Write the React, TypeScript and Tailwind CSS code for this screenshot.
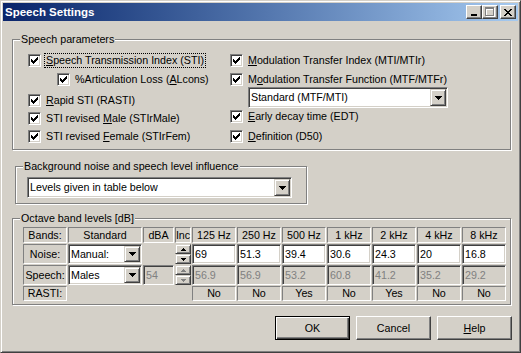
import React from "react";

// classic 3D edges
const sunken2 =
  "border border-t-[#808080] border-l-[#808080] border-r-white border-b-white shadow-[inset_1px_1px_#404040,inset_-1px_-1px_#d4d0c8]";
const sunken1 = "border border-t-[#808080] border-l-[#808080] border-r-white border-b-white";
const raisedBtn =
  "border border-t-[#d4d0c8] border-l-[#d4d0c8] border-r-[#404040] border-b-[#404040] shadow-[inset_1px_1px_#fff,inset_-1px_-1px_#808080]";
const pushBtn =
  "border border-t-white border-l-white border-r-[#404040] border-b-[#404040] shadow-[inset_-1px_-1px_#808080]";
const groupBox = "border border-[#808080] shadow-[inset_1px_1px_#fff,1px_1px_#fff]";

const CheckMark = () => (
  <svg width="7" height="7" viewBox="0 0 7 7" shapeRendering="crispEdges">
    <path
      d="M0 2h1v3H0z M1 3h1v3H1z M2 4h1v3H2z M3 3h1v3H3z M4 2h1v3H4z M5 1h1v3H5z M6 0h1v3H6z"
      fill="#000"
    />
  </svg>
);

const DownArrow = ({ color = "#000" }: { color?: string }) => (
  <svg width="7" height="4" viewBox="0 0 7 4" shapeRendering="crispEdges">
    <path d="M0 0h7v1H0z M1 1h5v1H1z M2 2h3v1H2z M3 3h1v1H3z" fill={color} />
  </svg>
);

const SmallArrow = ({ up, color }: { up: boolean; color: string }) => (
  <svg width="5" height="3" viewBox="0 0 5 3" shapeRendering="crispEdges">
    <path
      d={up ? "M2 0h1v1H2z M1 1h3v1H1z M0 2h5v1H0z" : "M0 0h5v1H0z M1 1h3v1H1z M2 2h1v1H2z"}
      fill={color}
    />
  </svg>
);

const CheckRow = ({
  children,
  className = "",
  focus = false,
}: {
  children: React.ReactNode;
  className?: string;
  focus?: boolean;
}) => (
  <div className={`flex items-center h-[13px] ${className}`}>
    <span className={`w-[13px] h-[13px] shrink-0 flex items-center justify-center bg-white ${sunken2}`}>
      <CheckMark />
    </span>
    <span
      className={`ml-[3px] px-[1px] leading-[13px] whitespace-nowrap border border-dotted ${
        focus ? "border-black" : "border-transparent"
      }`}
    >
      {children}
    </span>
  </div>
);

const U = ({ children }: { children: React.ReactNode }) => (
  <span className="underline underline-offset-[1px]">{children}</span>
);

const Combo = ({ text, className = "" }: { text: string; className?: string }) => (
  <div className={`flex p-[1px] bg-white ${sunken2} ${className}`}>
    <span className="flex-1 self-center pl-[1px] leading-[13px] whitespace-nowrap overflow-hidden">{text}</span>
    <span className={`w-[16px] h-full shrink-0 flex items-center justify-center bg-[#d4d0c8] ${raisedBtn}`}>
      <DownArrow />
    </span>
  </div>
);

const Spinner = ({ disabled = false }: { disabled?: boolean }) => {
  const c = disabled ? "#808080" : "#000";
  return (
    <div className="flex flex-col w-[16px] h-full">
      <span className={`flex-1 flex items-center justify-center bg-[#d4d0c8] ${raisedBtn}`}>
        <SmallArrow up color={c} />
      </span>
      <span className={`flex-1 flex items-center justify-center bg-[#d4d0c8] ${raisedBtn}`}>
        <SmallArrow up={false} color={c} />
      </span>
    </div>
  );
};

const GroupLabel = ({ children }: { children: React.ReactNode }) => (
  <div className="-mt-[7px] ml-[7px] px-[1px] w-fit bg-[#d4d0c8] leading-[13px] whitespace-nowrap">{children}</div>
);

const bands = ["125 Hz", "250 Hz", "500 Hz", "1 kHz", "2 kHz", "4 kHz", "8 kHz"];
const noise = ["69", "51.3", "39.4", "30.6", "24.3", "20", "16.8"];
const speech = ["56.9", "56.9", "53.2", "60.8", "41.2", "35.2", "29.2"];
const rasti = ["No", "No", "Yes", "No", "Yes", "No", "No"];

const cellText = "flex items-center justify-center leading-[13px] whitespace-nowrap";

const TitleButton = ({ children, className = "" }: { children: React.ReactNode; className?: string }) => (
  <span className={`w-[16px] h-[14px] flex items-center justify-center bg-[#d4d0c8] ${pushBtn} ${className}`}>
    {children}
  </span>
);

export default function App() {
  return (
    <div
      className={`w-[521px] h-[353px] bg-[#d4d0c8] text-black text-[10.7px] font-['Liberation_Sans',Arial,sans-serif] border border-t-[#d4d0c8] border-l-[#d4d0c8] border-r-[#404040] border-b-[#404040] shadow-[inset_1px_1px_#fff,inset_-1px_-1px_#808080] p-[2px] flex flex-col overflow-hidden`}
    >
      {/* title bar */}
      <div className="h-[18px] shrink-0 flex items-center bg-linear-to-r from-[#0a246a] to-[#a6caf0] pl-[2px] pr-[2px]">
        <span className="text-white font-bold text-[11.5px] leading-[14px]">Speech Settings</span>
        <div className="ml-auto flex items-center">
          <TitleButton>
            <svg width="8" height="7" viewBox="0 0 8 7" shapeRendering="crispEdges">
              <path d="M1 5h6v2H1z" fill="#000" />
            </svg>
          </TitleButton>
          <TitleButton>
            <svg width="10" height="10" viewBox="0 0 10 10" shapeRendering="crispEdges">
              <path d="M1 1h9v9H1z M2 3v6h7V3z" fill="#fff" fillRule="evenodd" />
              <path d="M0 0h9v9H0z M1 2v6h7V2z" fill="#808080" fillRule="evenodd" />
            </svg>
          </TitleButton>
          <TitleButton className="ml-[2px]">
            <svg width="8" height="7" viewBox="0 0 8 7" shapeRendering="crispEdges">
              <path
                d="M0 0h2v1H0z M6 0h2v1H6z M1 1h2v1H1z M5 1h2v1H5z M2 2h4v1H2z M3 3h2v1H3z M2 4h4v1H2z M1 5h2v1H1z M5 5h2v1H5z M0 6h2v1H0z M6 6h2v1H6z"
                fill="#000"
              />
            </svg>
          </TitleButton>
        </div>
      </div>

      {/* Speech parameters */}
      <div className={`mt-[18px] ml-[9px] w-[499px] h-[111px] shrink-0 ${groupBox}`}>
        <GroupLabel>Speech parameters</GroupLabel>
        <div className="flex ml-[15px]">
          <div className="w-[202px] flex flex-col">
            <CheckRow className="mt-[8px]" focus>
              <U>S</U>peech Transmission Index (STI)
            </CheckRow>
            <CheckRow className="mt-[6px] ml-[29px]">
              %Articulation Loss (<U>A</U>Lcons)
            </CheckRow>
            <CheckRow className="mt-[8px]">
              <U>R</U>apid STI (RASTI)
            </CheckRow>
            <CheckRow className="mt-[5px]">
              STI revised <U>M</U>ale (STIrMale)
            </CheckRow>
            <CheckRow className="mt-[5px]">
              STI revised <U>F</U>emale (STIrFem)
            </CheckRow>
          </div>
          <div className="flex flex-col">
            <CheckRow className="mt-[8px]">
              <U>M</U>odulation Transfer Index (MTI/MTIr)
            </CheckRow>
            <CheckRow className="mt-[6px]">
              M<U>o</U>dulation Transfer Function (MTF/MTFr)
            </CheckRow>
            <Combo text="Standard (MTF/MTI)" className="mt-[1px] ml-[18px] w-[200px] h-[21px]" />
            <CheckRow className="mt-[2px]">
              <U>E</U>arly decay time (EDT)
            </CheckRow>
            <CheckRow className="mt-[7px]">
              <U>D</U>efinition (D50)
            </CheckRow>
          </div>
        </div>
      </div>

      {/* Background noise */}
      <div className={`mt-[16px] ml-[12px] w-[292px] h-[38px] shrink-0 ${groupBox}`}>
        <GroupLabel>Background noise and speech level influence</GroupLabel>
        <Combo text="Levels given in table below" className="mt-[4px] ml-[11px] w-[265px] h-[21px]" />
      </div>

      {/* Octave band levels */}
      <div className={`mt-[14px] ml-[9px] w-[499px] h-[87px] shrink-0 ${groupBox}`}>
        <GroupLabel>Octave band levels [dB]</GroupLabel>
        <div className="mt-[2px] ml-[10px] grid grid-cols-[44px_74px_31px_16px_repeat(7,44px)] grid-rows-[16px_20px_20px_15px] gap-[1px]">
          {/* header */}
          <div className={`${sunken1} ${cellText}`}>Bands:</div>
          <div className={`${sunken1} ${cellText}`}>Standard</div>
          <div className={`${sunken1} ${cellText}`}>dBA</div>
          <div className={`${sunken1} ${cellText}`}>Inc</div>
          {bands.map((b) => (
            <div key={b} className={`${sunken1} ${cellText}`}>
              {b}
            </div>
          ))}

          {/* noise */}
          <div className={`${sunken1} ${cellText}`}>Noise:</div>
          <Combo text="Manual:" />
          <div />
          <Spinner />
          {noise.map((v, i) => (
            <div key={i} className={`bg-white flex items-center pl-[2px] leading-[13px] ${sunken2}`}>
              {v}
            </div>
          ))}

          {/* speech */}
          <div className={`${sunken1} ${cellText}`}>Speech:</div>
          <Combo text="Males" />
          <div className={`flex items-center pl-[2px] leading-[13px] text-[#808080] ${sunken2}`}>54</div>
          <Spinner disabled />
          {speech.map((v, i) => (
            <div key={i} className={`flex items-center pl-[2px] leading-[13px] text-[#808080] ${sunken2}`}>
              {v}
            </div>
          ))}

          {/* rasti */}
          <div className={`${sunken1} ${cellText}`}>RASTI:</div>
          <div />
          <div />
          <div />
          {rasti.map((v, i) => (
            <div key={i} className={`${sunken1} ${cellText}`}>
              {v}
            </div>
          ))}
        </div>
      </div>

      {/* buttons */}
      <div className="mt-[11px] flex justify-end gap-[6px] pr-[6px]">
        <button className="w-[75px] h-[24px] border border-black shadow-[inset_1px_1px_#fff,inset_-1px_-1px_#404040,inset_-2px_-2px_#808080] bg-[#d4d0c8] leading-[13px]">
          OK
        </button>
        <button className={`w-[75px] h-[24px] bg-[#d4d0c8] leading-[13px] ${pushBtn}`}>Cancel</button>
        <button className={`w-[75px] h-[24px] bg-[#d4d0c8] leading-[13px] ${pushBtn}`}>
          <U>H</U>elp
        </button>
      </div>
    </div>
  );
}
